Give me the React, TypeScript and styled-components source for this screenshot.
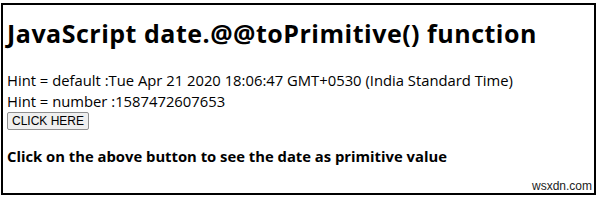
import styled, { createGlobalStyle } from 'styled-components';

const GlobalStyle = createGlobalStyle`
  html, body {
    margin: 0;
    padding: 0;
    background: #ffffff;
  }
  body {
    font-family: 'Open Sans', 'Noto Sans', sans-serif;
    color: #000000;
  }
`;

const Page = styled.div`
  padding: 3px 0 0 1px;
`;

const Frame = styled.div`
  box-sizing: border-box;
  width: 595px;
  height: 192px;
  border: 2px solid #000;
  padding: 0 0 0 4px;
  position: relative;
`;

const Title = styled.h1`
  margin: 11px 0 0;
  font-size: 25px;
  line-height: 34px;
  font-weight: 700;
  letter-spacing: 0.5px;
`;

const Line = styled.div`
  font-size: 14.8px;
  line-height: 21px;
`;

const Lines = styled.div`
  margin-top: 20px;
`;

const Button = styled.button`
  display: block;
  box-sizing: border-box;
  height: 18px;
  font-family: 'Liberation Sans', Arial, sans-serif;
  font-size: 12px;
  line-height: 14px;
  padding: 0 4px;
  margin: 0;
  background: #efefef;
  border: 1px solid #8f8f8f;
  border-radius: 2px;
  color: #000;
`;

const Note = styled.p`
  margin: 16px 0 0;
  font-size: 14.8px;
  font-weight: 700;
`;

const Watermark = styled.span`
  position: absolute;
  right: 2px;
  bottom: 0;
  font-family: 'Liberation Sans', Arial, sans-serif;
  font-size: 12px;
  color: #222;
`;

export default function App() {
  return (
    <Page>
      <GlobalStyle />
      <Frame>
        <Title>JavaScript date.@@toPrimitive() function</Title>
        <Lines>
          <Line>Hint = default :Tue Apr 21 2020 18:06:47 GMT+0530 (India Standard Time)</Line>
          <Line>Hint = number :1587472607653</Line>
        </Lines>
        <Button>CLICK HERE</Button>
        <Note>Click on the above button to see the date as primitive value</Note>
        <Watermark>wsxdn.com</Watermark>
      </Frame>
    </Page>
  );
}
